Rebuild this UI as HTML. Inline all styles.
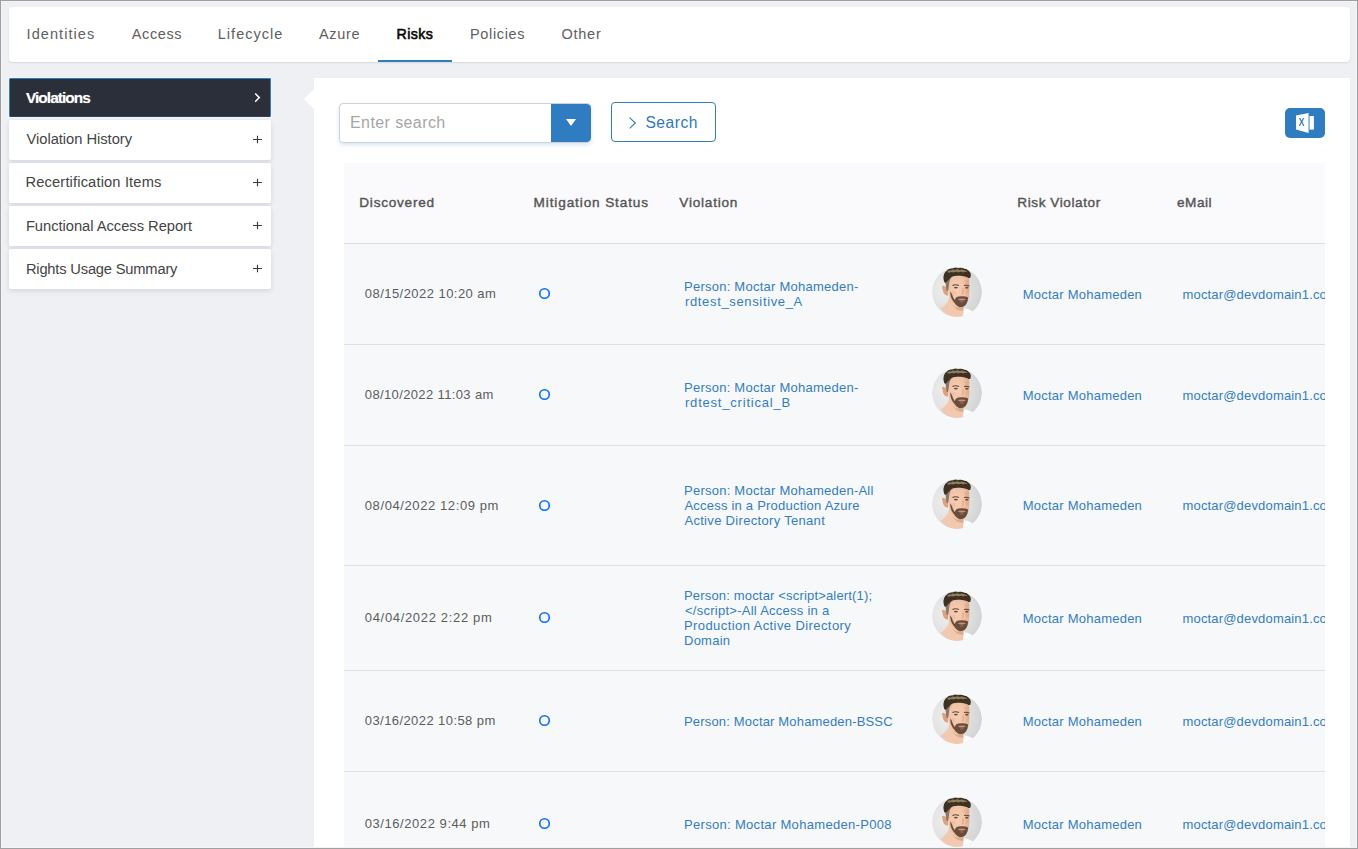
<!DOCTYPE html>
<html lang="en">
<head>
<meta charset="utf-8">
<title>Risks - Violations</title>
<style>
*{box-sizing:border-box;margin:0;padding:0}
html,body{width:1358px;height:849px;overflow:hidden;background:#eef0f4}
body{font-family:"Liberation Sans",sans-serif;position:relative;color:#555}
a{text-decoration:none}
.frame{position:absolute;left:0;top:0;width:1358px;height:849px;border:1px solid #a0a0a0;box-shadow:inset 0 0 0 1px #f3f4f8;pointer-events:none;z-index:50}
.t{position:absolute;white-space:nowrap;line-height:normal;display:block}
.tabs{position:absolute;left:9px;top:7px;width:1341px;height:55px;background:#fff;border-radius:4px;box-shadow:0 1px 2px rgba(0,0,0,.10)}
.tabline{position:absolute;left:378px;top:60px;width:74px;height:2px;background:#2f7dc0}
.mi{position:absolute;left:9px;width:262px;height:40px;background:#fff;border-radius:2px;box-shadow:0 2px 5px rgba(40,50,80,.13)}
.mi.on{background:#2b2f39;border:1px solid #2f7dc0;border-bottom-color:#2c445e;height:39px;box-shadow:0 0 0 1px rgba(255,255,255,.35);border-radius:1.5px}
.plus{position:absolute;left:253px}
.panel{position:absolute;left:314px;top:78px;width:1036px;height:771px;background:#fff}
.notch{position:absolute;left:304px;top:88.8px;width:0;height:0;border-top:10px solid transparent;border-bottom:10px solid transparent;border-right:10px solid #fff}
.search{position:absolute;left:339px;top:103px;width:252px;height:40px;border:1px solid #cfd3d8;border-radius:4px;background:#fff;box-shadow:0 2px 4px rgba(47,125,192,.19)}
.dd{position:absolute;left:551px;top:104px;width:40px;height:38px;background:#2f7dc0;border-radius:0 4.5px 4.5px 0}
.dd:after{content:"";position:absolute;left:15.3px;top:15px;border-left:5.2px solid transparent;border-right:5.2px solid transparent;border-top:7.3px solid #fff}
.btn{position:absolute;left:611px;top:102px;width:105px;height:40px;border:1px solid #2f7dc0;border-radius:4px;background:#fff}
.xl{position:absolute;left:1285px;top:108px;width:40px;height:30px;background:#2f7dc0;border-radius:5px}
.grid{position:absolute;left:344px;top:163px;width:981px;height:686px;background:#f7f8fa;overflow:hidden}
.gh{position:absolute;left:0;top:0;width:981px;height:80px;background:#fafafc}
.rl{position:absolute;left:0;width:981px;height:1px;background:#dcdfe3}
.dot{position:absolute;left:537.9px}
.av{position:absolute;left:932.2px;width:50px;height:50px;border-radius:50%;overflow:hidden}
.av svg{display:block}
.clip{position:absolute;left:0;top:0;width:1325px;height:849px;overflow:hidden}
</style>
</head>
<body>

<nav class="tabs"></nav>
<div class="tabline"></div>
<a class="t" style="left:26.60px;top:26px;font-size:14.5px;letter-spacing:1.068px;color:#606060;">Identities</a>
<a class="t" style="left:131.80px;top:26px;font-size:14.5px;letter-spacing:0.603px;color:#606060;">Access</a>
<a class="t" style="left:217.80px;top:26px;font-size:14.5px;letter-spacing:1.006px;color:#606060;">Lifecycle</a>
<a class="t" style="left:318.90px;top:26px;font-size:14.5px;letter-spacing:0.671px;color:#606060;">Azure</a>
<a class="t" style="left:396.60px;top:26px;font-size:14.2px;letter-spacing:0.379px;color:#0a0a0a;-webkit-text-stroke:0.6px #0a0a0a;">Risks</a>
<a class="t" style="left:470.00px;top:26px;font-size:14.5px;letter-spacing:0.655px;color:#606060;">Policies</a>
<a class="t" style="left:561.50px;top:26px;font-size:14.5px;letter-spacing:0.741px;color:#606060;">Other</a>
<div class="mi on" style="top:78px"></div>
<div class="mi" style="top:120px"></div>
<svg class="plus" style="top:135px" width="9" height="9" viewBox="0 0 9 9"><path d="M0 4.5 H9 M4.5 0.7 V8.3" stroke="#3a3a3a" stroke-width="1.15" fill="none"/></svg>
<div class="mi" style="top:163px"></div>
<svg class="plus" style="top:178px" width="9" height="9" viewBox="0 0 9 9"><path d="M0 4.5 H9 M4.5 0.7 V8.3" stroke="#3a3a3a" stroke-width="1.15" fill="none"/></svg>
<div class="mi" style="top:206px"></div>
<svg class="plus" style="top:221px" width="9" height="9" viewBox="0 0 9 9"><path d="M0 4.5 H9 M4.5 0.7 V8.3" stroke="#3a3a3a" stroke-width="1.15" fill="none"/></svg>
<div class="mi" style="top:249px"></div>
<svg class="plus" style="top:264px" width="9" height="9" viewBox="0 0 9 9"><path d="M0 4.5 H9 M4.5 0.7 V8.3" stroke="#3a3a3a" stroke-width="1.15" fill="none"/></svg>
<svg style="position:absolute;left:253px;top:91px" width="9" height="13" viewBox="0 0 9 13"><path d="M2.2 2.5 L6.3 6.6 L2.2 10.7" fill="none" stroke="#fff" stroke-width="1.5"/></svg>
<a class="t" style="left:25.90px;top:89px;font-size:15.4px;letter-spacing:-0.923px;color:#fff;font-weight:700;text-shadow:0 0 1px rgba(255,255,255,.5);">Violations</a>
<a class="t" style="left:26.50px;top:131px;font-size:14.7px;letter-spacing:-0.019px;color:#444;">Violation History</a>
<a class="t" style="left:25.50px;top:174px;font-size:14.7px;letter-spacing:0.14px;color:#444;">Recertification Items</a>
<a class="t" style="left:25.90px;top:218px;font-size:14.7px;letter-spacing:-0.016px;color:#444;">Functional Access Report</a>
<a class="t" style="left:25.90px;top:261px;font-size:14.7px;letter-spacing:-0.186px;color:#444;">Rights Usage Summary</a>
<main class="panel"></main><div class="notch"></div>
<div class="search"></div><div class="dd"></div>
<span class="t" style="left:350.00px;top:114px;font-size:16px;letter-spacing:0.408px;color:#a6a6a6;">Enter search</span>
<div class="btn"></div>
<svg style="position:absolute;left:627px;top:117px" width="10" height="12" viewBox="0 0 10 12"><path d="M2.7 0.6 L8.3 6 L2.7 11.4" fill="none" stroke="#2f78bd" stroke-width="1.05"/></svg>
<span class="t" style="left:645.40px;top:114px;font-size:15.6px;letter-spacing:0.533px;color:#2f78bd;">Search</span>
<div class="xl"><svg style="position:absolute;left:10px;top:4px" width="20" height="22" viewBox="0 0 20 22"><path d="M1 3.6 L13.6 1 L13.6 21 L1 17.6 Z" fill="#fff"/><rect x="13.6" y="4" width="1.3" height="13.6" fill="#8fbde3"/><rect x="14.9" y="4" width="4" height="13.6" fill="#fff"/></svg><span class="t" style="left:13.2px;top:8px;font-size:11px;font-weight:700;color:#2f7dc0;transform:scaleX(.78);transform-origin:50% 50%">X</span></div>
<section class="grid"><div class="gh"></div>
<div class="rl" style="top:80px"></div>
<div class="rl" style="top:181px"></div>
<div class="rl" style="top:282px"></div>
<div class="rl" style="top:402px"></div>
<div class="rl" style="top:507px"></div>
<div class="rl" style="top:608px"></div>
</section>
<span class="t" style="left:359.30px;top:195px;font-size:13.6px;letter-spacing:0.752px;color:#555;-webkit-text-stroke:0.4px #555;">Discovered</span>
<span class="t" style="left:533.60px;top:195px;font-size:13.6px;letter-spacing:0.875px;color:#555;-webkit-text-stroke:0.4px #555;">Mitigation Status</span>
<span class="t" style="left:679.30px;top:195px;font-size:13.6px;letter-spacing:0.77px;color:#555;-webkit-text-stroke:0.4px #555;">Violation</span>
<span class="t" style="left:1017.30px;top:195px;font-size:13.6px;letter-spacing:0.573px;color:#555;-webkit-text-stroke:0.4px #555;">Risk Violator</span>
<span class="t" style="left:1177.10px;top:195px;font-size:13.6px;letter-spacing:0.459px;color:#555;-webkit-text-stroke:0.4px #555;">eMail</span>
<div class="clip">
<span class="t" style="left:364.80px;top:286px;font-size:13px;letter-spacing:0.453px;color:#5c5c5c;">08/15/2022 10:20 am</span>
<svg class="dot" style="top:286.9px" width="13" height="13" viewBox="0 0 13 13"><circle cx="6.5" cy="6.5" r="4.75" fill="none" stroke="#0d6efd" stroke-width="1.6"/></svg>
<a class="t" style="left:684.00px;top:279px;font-size:13px;letter-spacing:0.245px;color:#347dc1;">Person: Moctar Mohameden-</a>
<a class="t" style="left:685.00px;top:294px;font-size:13px;letter-spacing:0.65px;color:#347dc1;">rdtest_sensitive_A</a>
<div class="av" style="top:267px"><svg width="50" height="50" viewBox="0 0 50 50" aria-label="Moctar Mohameden"><defs><radialGradient id="abg" cx="0.3" cy="0.45" r="0.8"><stop offset="0" stop-color="#efefef"/><stop offset="0.6" stop-color="#dedede"/><stop offset="1" stop-color="#cecece"/></radialGradient><radialGradient id="afc" cx="0.42" cy="0.42" r="0.7"><stop offset="0" stop-color="#f8d0b6"/><stop offset="0.65" stop-color="#efbfa2"/><stop offset="1" stop-color="#dca689"/></radialGradient><filter id="abl" filterUnits="userSpaceOnUse" x="-5" y="-5" width="60" height="60"><feGaussianBlur stdDeviation="0.55"/></filter><filter id="abs" filterUnits="userSpaceOnUse" x="-5" y="-5" width="60" height="60"><feGaussianBlur stdDeviation="0.4"/></filter><clipPath id="acl"><circle cx="25" cy="25" r="25"/></clipPath></defs><g clip-path="url(#acl)"><rect width="50" height="50" fill="url(#abg)"/><g filter="url(#abl)"><path d="M2 52 L6 44 L9 41.4 L17 49 L31 46 L31.4 41 Q37 42 41 44.4 L46 52 Z" fill="#fcfcfe"/><path d="M8 42.4 L10 41 L17.4 48.4 L16 50 Z" fill="#c9c9dd" opacity=".8"/><path d="M8.6 41.8 Q13 39 16 34.6 L17.5 29 L31 33 Q31 37 31.4 40.3 Q31.6 45 30.7 52 L20 52 L17 49 L8.6 41.8 Z" fill="#f2c9af"/><path d="M20 37.6 Q26 43.4 31.4 39.6 L31.5 43.4 Q26 45.4 20 37.6 Z" fill="#c9957c" opacity=".6"/><path d="M10.1 20.6 Q9.4 18.7 11.4 18.8 Q14 19.3 15.6 22 L16.2 28.4 Q12.6 29 11.2 25 Z" fill="#dba182"/><path d="M15.4 13 Q16 8.8 22 8.4 L35 8.8 Q37.4 10 37.2 15 L37.2 27 Q36.8 33.6 33.6 38 Q30 41.2 26.4 40.2 Q21 38.2 18.4 32.4 Q15.4 26 15.4 13 Z" fill="url(#afc)"/><path d="M32 13 Q34.4 20 33.4 28 Q35.6 27 37.2 25 L37.2 13 Z" fill="#dda283" opacity=".45"/><path d="M14.6 24 Q13 17 13.8 11 Q14.4 8.4 19 8.6 L19.4 10.8 Q17.2 13 17 18 Q16.8 21 16 24 Z" fill="#8a7766"/><path d="M11.6 12.6 Q10.8 6 15 3.4 Q17 0.8 20.4 1.6 Q23 -0.2 26 1.2 Q29 -0.2 31.6 1.4 Q35 1 36.8 4 Q39.8 6.4 38.4 10.4 Q37.4 11.8 35.4 10.2 Q31 8.2 26 8.8 Q21 8.6 18.4 10.8 Q16.4 13.4 13.4 16 Q11.8 15 11.6 12.6 Z" fill="#3d3024"/><path d="M15 5.2 Q16.6 2.6 19 3.6 Q20.6 1.8 23 3 Q25.4 1.6 27.6 3 Q30 1.8 32 3.2 Q34.6 3 35.6 5.2 Q33 4.2 31 5.4 Q28.6 4 26.4 5.4 Q24 4.2 21.6 5.6 Q19.4 4.4 17.6 5.8 Q16.2 5 15 5.2 Z" fill="#9f8868" opacity=".85"/><path d="M18 24.6 Q18.2 30 20.8 33.8 Q23.6 38.2 27.4 40.2 Q31 40.6 33.6 38 Q35.8 35 36.2 30.8 Q35.6 29.8 33.2 29.4 Q29.8 28.9 26.4 29.5 Q24 29.8 23.2 32 Q22.8 33.4 22.4 32.6 Q20.6 30 19.8 26.6 Z" fill="#5a4131" opacity=".9"/><ellipse cx="29.8" cy="35" rx="1.9" ry="0.8" fill="#a87a60" opacity=".7"/><path d="M25.6 31.9 Q29.6 31 34 31.9 Q32.4 33.6 29.8 33.6 Q27.2 33.6 25.6 31.9 Z" fill="#d48c7c"/><ellipse cx="21.6" cy="25.6" rx="2.4" ry="1.9" fill="#f4b5a0" opacity=".55"/></g><g filter="url(#abs)"><path d="M20.4 18.6 Q23.6 17 27 18.6" fill="none" stroke="#5d4433" stroke-width="1.1"/><path d="M32 18.6 Q34.8 17.6 37.3 19" fill="none" stroke="#5d4433" stroke-width="1.1"/><ellipse cx="23.9" cy="20.6" rx="2" ry="0.85" fill="#65503f"/><ellipse cx="34.8" cy="20.7" rx="1.7" ry="0.85" fill="#65503f"/><path d="M30.8 21.4 Q31.9 25 30.5 27.2" fill="none" stroke="#d4987d" stroke-width="0.9"/></g></g></svg>
</div>
<a class="t" style="left:1022.70px;top:287px;font-size:13px;letter-spacing:0.235px;color:#347dc1;">Moctar Mohameden</a>
<a class="t" style="left:1182.50px;top:287px;font-size:13px;letter-spacing:0.17px;color:#347dc1;">moctar@devdomain1.com</a>
<span class="t" style="left:364.80px;top:387px;font-size:13px;letter-spacing:0.368px;color:#5c5c5c;">08/10/2022 11:03 am</span>
<svg class="dot" style="top:387.9px" width="13" height="13" viewBox="0 0 13 13"><circle cx="6.5" cy="6.5" r="4.75" fill="none" stroke="#0d6efd" stroke-width="1.6"/></svg>
<a class="t" style="left:684.00px;top:380px;font-size:13px;letter-spacing:0.245px;color:#347dc1;">Person: Moctar Mohameden-</a>
<a class="t" style="left:685.00px;top:395px;font-size:13px;letter-spacing:0.793px;color:#347dc1;">rdtest_critical_B</a>
<div class="av" style="top:368px"><svg width="50" height="50" viewBox="0 0 50 50" aria-label="Moctar Mohameden"><g clip-path="url(#acl)"><rect width="50" height="50" fill="url(#abg)"/><g filter="url(#abl)"><path d="M2 52 L6 44 L9 41.4 L17 49 L31 46 L31.4 41 Q37 42 41 44.4 L46 52 Z" fill="#fcfcfe"/><path d="M8 42.4 L10 41 L17.4 48.4 L16 50 Z" fill="#c9c9dd" opacity=".8"/><path d="M8.6 41.8 Q13 39 16 34.6 L17.5 29 L31 33 Q31 37 31.4 40.3 Q31.6 45 30.7 52 L20 52 L17 49 L8.6 41.8 Z" fill="#f2c9af"/><path d="M20 37.6 Q26 43.4 31.4 39.6 L31.5 43.4 Q26 45.4 20 37.6 Z" fill="#c9957c" opacity=".6"/><path d="M10.1 20.6 Q9.4 18.7 11.4 18.8 Q14 19.3 15.6 22 L16.2 28.4 Q12.6 29 11.2 25 Z" fill="#dba182"/><path d="M15.4 13 Q16 8.8 22 8.4 L35 8.8 Q37.4 10 37.2 15 L37.2 27 Q36.8 33.6 33.6 38 Q30 41.2 26.4 40.2 Q21 38.2 18.4 32.4 Q15.4 26 15.4 13 Z" fill="url(#afc)"/><path d="M32 13 Q34.4 20 33.4 28 Q35.6 27 37.2 25 L37.2 13 Z" fill="#dda283" opacity=".45"/><path d="M14.6 24 Q13 17 13.8 11 Q14.4 8.4 19 8.6 L19.4 10.8 Q17.2 13 17 18 Q16.8 21 16 24 Z" fill="#8a7766"/><path d="M11.6 12.6 Q10.8 6 15 3.4 Q17 0.8 20.4 1.6 Q23 -0.2 26 1.2 Q29 -0.2 31.6 1.4 Q35 1 36.8 4 Q39.8 6.4 38.4 10.4 Q37.4 11.8 35.4 10.2 Q31 8.2 26 8.8 Q21 8.6 18.4 10.8 Q16.4 13.4 13.4 16 Q11.8 15 11.6 12.6 Z" fill="#3d3024"/><path d="M15 5.2 Q16.6 2.6 19 3.6 Q20.6 1.8 23 3 Q25.4 1.6 27.6 3 Q30 1.8 32 3.2 Q34.6 3 35.6 5.2 Q33 4.2 31 5.4 Q28.6 4 26.4 5.4 Q24 4.2 21.6 5.6 Q19.4 4.4 17.6 5.8 Q16.2 5 15 5.2 Z" fill="#9f8868" opacity=".85"/><path d="M18 24.6 Q18.2 30 20.8 33.8 Q23.6 38.2 27.4 40.2 Q31 40.6 33.6 38 Q35.8 35 36.2 30.8 Q35.6 29.8 33.2 29.4 Q29.8 28.9 26.4 29.5 Q24 29.8 23.2 32 Q22.8 33.4 22.4 32.6 Q20.6 30 19.8 26.6 Z" fill="#5a4131" opacity=".9"/><ellipse cx="29.8" cy="35" rx="1.9" ry="0.8" fill="#a87a60" opacity=".7"/><path d="M25.6 31.9 Q29.6 31 34 31.9 Q32.4 33.6 29.8 33.6 Q27.2 33.6 25.6 31.9 Z" fill="#d48c7c"/><ellipse cx="21.6" cy="25.6" rx="2.4" ry="1.9" fill="#f4b5a0" opacity=".55"/></g><g filter="url(#abs)"><path d="M20.4 18.6 Q23.6 17 27 18.6" fill="none" stroke="#5d4433" stroke-width="1.1"/><path d="M32 18.6 Q34.8 17.6 37.3 19" fill="none" stroke="#5d4433" stroke-width="1.1"/><ellipse cx="23.9" cy="20.6" rx="2" ry="0.85" fill="#65503f"/><ellipse cx="34.8" cy="20.7" rx="1.7" ry="0.85" fill="#65503f"/><path d="M30.8 21.4 Q31.9 25 30.5 27.2" fill="none" stroke="#d4987d" stroke-width="0.9"/></g></g></svg>
</div>
<a class="t" style="left:1022.70px;top:388px;font-size:13px;letter-spacing:0.235px;color:#347dc1;">Moctar Mohameden</a>
<a class="t" style="left:1182.50px;top:388px;font-size:13px;letter-spacing:0.17px;color:#347dc1;">moctar@devdomain1.com</a>
<span class="t" style="left:364.80px;top:498px;font-size:13px;letter-spacing:0.597px;color:#5c5c5c;">08/04/2022 12:09 pm</span>
<svg class="dot" style="top:498.8px" width="13" height="13" viewBox="0 0 13 13"><circle cx="6.5" cy="6.5" r="4.75" fill="none" stroke="#0d6efd" stroke-width="1.6"/></svg>
<a class="t" style="left:684.00px;top:483px;font-size:13px;letter-spacing:0.244px;color:#347dc1;">Person: Moctar Mohameden-All</a>
<a class="t" style="left:684.40px;top:498px;font-size:13px;letter-spacing:0.223px;color:#347dc1;">Access in a Production Azure</a>
<a class="t" style="left:684.40px;top:513px;font-size:13px;letter-spacing:0.316px;color:#347dc1;">Active Directory Tenant</a>
<div class="av" style="top:479px"><svg width="50" height="50" viewBox="0 0 50 50" aria-label="Moctar Mohameden"><g clip-path="url(#acl)"><rect width="50" height="50" fill="url(#abg)"/><g filter="url(#abl)"><path d="M2 52 L6 44 L9 41.4 L17 49 L31 46 L31.4 41 Q37 42 41 44.4 L46 52 Z" fill="#fcfcfe"/><path d="M8 42.4 L10 41 L17.4 48.4 L16 50 Z" fill="#c9c9dd" opacity=".8"/><path d="M8.6 41.8 Q13 39 16 34.6 L17.5 29 L31 33 Q31 37 31.4 40.3 Q31.6 45 30.7 52 L20 52 L17 49 L8.6 41.8 Z" fill="#f2c9af"/><path d="M20 37.6 Q26 43.4 31.4 39.6 L31.5 43.4 Q26 45.4 20 37.6 Z" fill="#c9957c" opacity=".6"/><path d="M10.1 20.6 Q9.4 18.7 11.4 18.8 Q14 19.3 15.6 22 L16.2 28.4 Q12.6 29 11.2 25 Z" fill="#dba182"/><path d="M15.4 13 Q16 8.8 22 8.4 L35 8.8 Q37.4 10 37.2 15 L37.2 27 Q36.8 33.6 33.6 38 Q30 41.2 26.4 40.2 Q21 38.2 18.4 32.4 Q15.4 26 15.4 13 Z" fill="url(#afc)"/><path d="M32 13 Q34.4 20 33.4 28 Q35.6 27 37.2 25 L37.2 13 Z" fill="#dda283" opacity=".45"/><path d="M14.6 24 Q13 17 13.8 11 Q14.4 8.4 19 8.6 L19.4 10.8 Q17.2 13 17 18 Q16.8 21 16 24 Z" fill="#8a7766"/><path d="M11.6 12.6 Q10.8 6 15 3.4 Q17 0.8 20.4 1.6 Q23 -0.2 26 1.2 Q29 -0.2 31.6 1.4 Q35 1 36.8 4 Q39.8 6.4 38.4 10.4 Q37.4 11.8 35.4 10.2 Q31 8.2 26 8.8 Q21 8.6 18.4 10.8 Q16.4 13.4 13.4 16 Q11.8 15 11.6 12.6 Z" fill="#3d3024"/><path d="M15 5.2 Q16.6 2.6 19 3.6 Q20.6 1.8 23 3 Q25.4 1.6 27.6 3 Q30 1.8 32 3.2 Q34.6 3 35.6 5.2 Q33 4.2 31 5.4 Q28.6 4 26.4 5.4 Q24 4.2 21.6 5.6 Q19.4 4.4 17.6 5.8 Q16.2 5 15 5.2 Z" fill="#9f8868" opacity=".85"/><path d="M18 24.6 Q18.2 30 20.8 33.8 Q23.6 38.2 27.4 40.2 Q31 40.6 33.6 38 Q35.8 35 36.2 30.8 Q35.6 29.8 33.2 29.4 Q29.8 28.9 26.4 29.5 Q24 29.8 23.2 32 Q22.8 33.4 22.4 32.6 Q20.6 30 19.8 26.6 Z" fill="#5a4131" opacity=".9"/><ellipse cx="29.8" cy="35" rx="1.9" ry="0.8" fill="#a87a60" opacity=".7"/><path d="M25.6 31.9 Q29.6 31 34 31.9 Q32.4 33.6 29.8 33.6 Q27.2 33.6 25.6 31.9 Z" fill="#d48c7c"/><ellipse cx="21.6" cy="25.6" rx="2.4" ry="1.9" fill="#f4b5a0" opacity=".55"/></g><g filter="url(#abs)"><path d="M20.4 18.6 Q23.6 17 27 18.6" fill="none" stroke="#5d4433" stroke-width="1.1"/><path d="M32 18.6 Q34.8 17.6 37.3 19" fill="none" stroke="#5d4433" stroke-width="1.1"/><ellipse cx="23.9" cy="20.6" rx="2" ry="0.85" fill="#65503f"/><ellipse cx="34.8" cy="20.7" rx="1.7" ry="0.85" fill="#65503f"/><path d="M30.8 21.4 Q31.9 25 30.5 27.2" fill="none" stroke="#d4987d" stroke-width="0.9"/></g></g></svg>
</div>
<a class="t" style="left:1022.70px;top:498px;font-size:13px;letter-spacing:0.235px;color:#347dc1;">Moctar Mohameden</a>
<a class="t" style="left:1182.50px;top:498px;font-size:13px;letter-spacing:0.17px;color:#347dc1;">moctar@devdomain1.com</a>
<span class="t" style="left:364.80px;top:610px;font-size:13px;letter-spacing:0.669px;color:#5c5c5c;">04/04/2022 2:22 pm</span>
<svg class="dot" style="top:610.9px" width="13" height="13" viewBox="0 0 13 13"><circle cx="6.5" cy="6.5" r="4.75" fill="none" stroke="#0d6efd" stroke-width="1.6"/></svg>
<a class="t" style="left:684.00px;top:588px;font-size:13px;letter-spacing:0.172px;color:#347dc1;">Person: moctar &lt;script&gt;alert(1);</a>
<a class="t" style="left:685.00px;top:603px;font-size:13px;letter-spacing:0.259px;color:#347dc1;">&lt;/script&gt;-All Access in a</a>
<a class="t" style="left:684.00px;top:618px;font-size:13px;letter-spacing:0.412px;color:#347dc1;">Production Active Directory</a>
<a class="t" style="left:684.00px;top:633px;font-size:13px;letter-spacing:0.247px;color:#347dc1;">Domain</a>
<div class="av" style="top:591px"><svg width="50" height="50" viewBox="0 0 50 50" aria-label="Moctar Mohameden"><g clip-path="url(#acl)"><rect width="50" height="50" fill="url(#abg)"/><g filter="url(#abl)"><path d="M2 52 L6 44 L9 41.4 L17 49 L31 46 L31.4 41 Q37 42 41 44.4 L46 52 Z" fill="#fcfcfe"/><path d="M8 42.4 L10 41 L17.4 48.4 L16 50 Z" fill="#c9c9dd" opacity=".8"/><path d="M8.6 41.8 Q13 39 16 34.6 L17.5 29 L31 33 Q31 37 31.4 40.3 Q31.6 45 30.7 52 L20 52 L17 49 L8.6 41.8 Z" fill="#f2c9af"/><path d="M20 37.6 Q26 43.4 31.4 39.6 L31.5 43.4 Q26 45.4 20 37.6 Z" fill="#c9957c" opacity=".6"/><path d="M10.1 20.6 Q9.4 18.7 11.4 18.8 Q14 19.3 15.6 22 L16.2 28.4 Q12.6 29 11.2 25 Z" fill="#dba182"/><path d="M15.4 13 Q16 8.8 22 8.4 L35 8.8 Q37.4 10 37.2 15 L37.2 27 Q36.8 33.6 33.6 38 Q30 41.2 26.4 40.2 Q21 38.2 18.4 32.4 Q15.4 26 15.4 13 Z" fill="url(#afc)"/><path d="M32 13 Q34.4 20 33.4 28 Q35.6 27 37.2 25 L37.2 13 Z" fill="#dda283" opacity=".45"/><path d="M14.6 24 Q13 17 13.8 11 Q14.4 8.4 19 8.6 L19.4 10.8 Q17.2 13 17 18 Q16.8 21 16 24 Z" fill="#8a7766"/><path d="M11.6 12.6 Q10.8 6 15 3.4 Q17 0.8 20.4 1.6 Q23 -0.2 26 1.2 Q29 -0.2 31.6 1.4 Q35 1 36.8 4 Q39.8 6.4 38.4 10.4 Q37.4 11.8 35.4 10.2 Q31 8.2 26 8.8 Q21 8.6 18.4 10.8 Q16.4 13.4 13.4 16 Q11.8 15 11.6 12.6 Z" fill="#3d3024"/><path d="M15 5.2 Q16.6 2.6 19 3.6 Q20.6 1.8 23 3 Q25.4 1.6 27.6 3 Q30 1.8 32 3.2 Q34.6 3 35.6 5.2 Q33 4.2 31 5.4 Q28.6 4 26.4 5.4 Q24 4.2 21.6 5.6 Q19.4 4.4 17.6 5.8 Q16.2 5 15 5.2 Z" fill="#9f8868" opacity=".85"/><path d="M18 24.6 Q18.2 30 20.8 33.8 Q23.6 38.2 27.4 40.2 Q31 40.6 33.6 38 Q35.8 35 36.2 30.8 Q35.6 29.8 33.2 29.4 Q29.8 28.9 26.4 29.5 Q24 29.8 23.2 32 Q22.8 33.4 22.4 32.6 Q20.6 30 19.8 26.6 Z" fill="#5a4131" opacity=".9"/><ellipse cx="29.8" cy="35" rx="1.9" ry="0.8" fill="#a87a60" opacity=".7"/><path d="M25.6 31.9 Q29.6 31 34 31.9 Q32.4 33.6 29.8 33.6 Q27.2 33.6 25.6 31.9 Z" fill="#d48c7c"/><ellipse cx="21.6" cy="25.6" rx="2.4" ry="1.9" fill="#f4b5a0" opacity=".55"/></g><g filter="url(#abs)"><path d="M20.4 18.6 Q23.6 17 27 18.6" fill="none" stroke="#5d4433" stroke-width="1.1"/><path d="M32 18.6 Q34.8 17.6 37.3 19" fill="none" stroke="#5d4433" stroke-width="1.1"/><ellipse cx="23.9" cy="20.6" rx="2" ry="0.85" fill="#65503f"/><ellipse cx="34.8" cy="20.7" rx="1.7" ry="0.85" fill="#65503f"/><path d="M30.8 21.4 Q31.9 25 30.5 27.2" fill="none" stroke="#d4987d" stroke-width="0.9"/></g></g></svg>
</div>
<a class="t" style="left:1022.70px;top:611px;font-size:13px;letter-spacing:0.235px;color:#347dc1;">Moctar Mohameden</a>
<a class="t" style="left:1182.50px;top:611px;font-size:13px;letter-spacing:0.17px;color:#347dc1;">moctar@devdomain1.com</a>
<span class="t" style="left:364.80px;top:713px;font-size:13px;letter-spacing:0.42px;color:#5c5c5c;">03/16/2022 10:58 pm</span>
<svg class="dot" style="top:713.8px" width="13" height="13" viewBox="0 0 13 13"><circle cx="6.5" cy="6.5" r="4.75" fill="none" stroke="#0d6efd" stroke-width="1.6"/></svg>
<a class="t" style="left:684.00px;top:714px;font-size:13px;letter-spacing:0.173px;color:#347dc1;">Person: Moctar Mohameden-BSSC</a>
<div class="av" style="top:694px"><svg width="50" height="50" viewBox="0 0 50 50" aria-label="Moctar Mohameden"><g clip-path="url(#acl)"><rect width="50" height="50" fill="url(#abg)"/><g filter="url(#abl)"><path d="M2 52 L6 44 L9 41.4 L17 49 L31 46 L31.4 41 Q37 42 41 44.4 L46 52 Z" fill="#fcfcfe"/><path d="M8 42.4 L10 41 L17.4 48.4 L16 50 Z" fill="#c9c9dd" opacity=".8"/><path d="M8.6 41.8 Q13 39 16 34.6 L17.5 29 L31 33 Q31 37 31.4 40.3 Q31.6 45 30.7 52 L20 52 L17 49 L8.6 41.8 Z" fill="#f2c9af"/><path d="M20 37.6 Q26 43.4 31.4 39.6 L31.5 43.4 Q26 45.4 20 37.6 Z" fill="#c9957c" opacity=".6"/><path d="M10.1 20.6 Q9.4 18.7 11.4 18.8 Q14 19.3 15.6 22 L16.2 28.4 Q12.6 29 11.2 25 Z" fill="#dba182"/><path d="M15.4 13 Q16 8.8 22 8.4 L35 8.8 Q37.4 10 37.2 15 L37.2 27 Q36.8 33.6 33.6 38 Q30 41.2 26.4 40.2 Q21 38.2 18.4 32.4 Q15.4 26 15.4 13 Z" fill="url(#afc)"/><path d="M32 13 Q34.4 20 33.4 28 Q35.6 27 37.2 25 L37.2 13 Z" fill="#dda283" opacity=".45"/><path d="M14.6 24 Q13 17 13.8 11 Q14.4 8.4 19 8.6 L19.4 10.8 Q17.2 13 17 18 Q16.8 21 16 24 Z" fill="#8a7766"/><path d="M11.6 12.6 Q10.8 6 15 3.4 Q17 0.8 20.4 1.6 Q23 -0.2 26 1.2 Q29 -0.2 31.6 1.4 Q35 1 36.8 4 Q39.8 6.4 38.4 10.4 Q37.4 11.8 35.4 10.2 Q31 8.2 26 8.8 Q21 8.6 18.4 10.8 Q16.4 13.4 13.4 16 Q11.8 15 11.6 12.6 Z" fill="#3d3024"/><path d="M15 5.2 Q16.6 2.6 19 3.6 Q20.6 1.8 23 3 Q25.4 1.6 27.6 3 Q30 1.8 32 3.2 Q34.6 3 35.6 5.2 Q33 4.2 31 5.4 Q28.6 4 26.4 5.4 Q24 4.2 21.6 5.6 Q19.4 4.4 17.6 5.8 Q16.2 5 15 5.2 Z" fill="#9f8868" opacity=".85"/><path d="M18 24.6 Q18.2 30 20.8 33.8 Q23.6 38.2 27.4 40.2 Q31 40.6 33.6 38 Q35.8 35 36.2 30.8 Q35.6 29.8 33.2 29.4 Q29.8 28.9 26.4 29.5 Q24 29.8 23.2 32 Q22.8 33.4 22.4 32.6 Q20.6 30 19.8 26.6 Z" fill="#5a4131" opacity=".9"/><ellipse cx="29.8" cy="35" rx="1.9" ry="0.8" fill="#a87a60" opacity=".7"/><path d="M25.6 31.9 Q29.6 31 34 31.9 Q32.4 33.6 29.8 33.6 Q27.2 33.6 25.6 31.9 Z" fill="#d48c7c"/><ellipse cx="21.6" cy="25.6" rx="2.4" ry="1.9" fill="#f4b5a0" opacity=".55"/></g><g filter="url(#abs)"><path d="M20.4 18.6 Q23.6 17 27 18.6" fill="none" stroke="#5d4433" stroke-width="1.1"/><path d="M32 18.6 Q34.8 17.6 37.3 19" fill="none" stroke="#5d4433" stroke-width="1.1"/><ellipse cx="23.9" cy="20.6" rx="2" ry="0.85" fill="#65503f"/><ellipse cx="34.8" cy="20.7" rx="1.7" ry="0.85" fill="#65503f"/><path d="M30.8 21.4 Q31.9 25 30.5 27.2" fill="none" stroke="#d4987d" stroke-width="0.9"/></g></g></svg>
</div>
<a class="t" style="left:1022.70px;top:714px;font-size:13px;letter-spacing:0.235px;color:#347dc1;">Moctar Mohameden</a>
<a class="t" style="left:1182.50px;top:714px;font-size:13px;letter-spacing:0.17px;color:#347dc1;">moctar@devdomain1.com</a>
<span class="t" style="left:364.80px;top:816px;font-size:13px;letter-spacing:0.558px;color:#5c5c5c;">03/16/2022 9:44 pm</span>
<svg class="dot" style="top:817.0px" width="13" height="13" viewBox="0 0 13 13"><circle cx="6.5" cy="6.5" r="4.75" fill="none" stroke="#0d6efd" stroke-width="1.6"/></svg>
<a class="t" style="left:684.00px;top:817px;font-size:13px;letter-spacing:0.315px;color:#347dc1;">Person: Moctar Mohameden-P008</a>
<div class="av" style="top:797px"><svg width="50" height="50" viewBox="0 0 50 50" aria-label="Moctar Mohameden"><g clip-path="url(#acl)"><rect width="50" height="50" fill="url(#abg)"/><g filter="url(#abl)"><path d="M2 52 L6 44 L9 41.4 L17 49 L31 46 L31.4 41 Q37 42 41 44.4 L46 52 Z" fill="#fcfcfe"/><path d="M8 42.4 L10 41 L17.4 48.4 L16 50 Z" fill="#c9c9dd" opacity=".8"/><path d="M8.6 41.8 Q13 39 16 34.6 L17.5 29 L31 33 Q31 37 31.4 40.3 Q31.6 45 30.7 52 L20 52 L17 49 L8.6 41.8 Z" fill="#f2c9af"/><path d="M20 37.6 Q26 43.4 31.4 39.6 L31.5 43.4 Q26 45.4 20 37.6 Z" fill="#c9957c" opacity=".6"/><path d="M10.1 20.6 Q9.4 18.7 11.4 18.8 Q14 19.3 15.6 22 L16.2 28.4 Q12.6 29 11.2 25 Z" fill="#dba182"/><path d="M15.4 13 Q16 8.8 22 8.4 L35 8.8 Q37.4 10 37.2 15 L37.2 27 Q36.8 33.6 33.6 38 Q30 41.2 26.4 40.2 Q21 38.2 18.4 32.4 Q15.4 26 15.4 13 Z" fill="url(#afc)"/><path d="M32 13 Q34.4 20 33.4 28 Q35.6 27 37.2 25 L37.2 13 Z" fill="#dda283" opacity=".45"/><path d="M14.6 24 Q13 17 13.8 11 Q14.4 8.4 19 8.6 L19.4 10.8 Q17.2 13 17 18 Q16.8 21 16 24 Z" fill="#8a7766"/><path d="M11.6 12.6 Q10.8 6 15 3.4 Q17 0.8 20.4 1.6 Q23 -0.2 26 1.2 Q29 -0.2 31.6 1.4 Q35 1 36.8 4 Q39.8 6.4 38.4 10.4 Q37.4 11.8 35.4 10.2 Q31 8.2 26 8.8 Q21 8.6 18.4 10.8 Q16.4 13.4 13.4 16 Q11.8 15 11.6 12.6 Z" fill="#3d3024"/><path d="M15 5.2 Q16.6 2.6 19 3.6 Q20.6 1.8 23 3 Q25.4 1.6 27.6 3 Q30 1.8 32 3.2 Q34.6 3 35.6 5.2 Q33 4.2 31 5.4 Q28.6 4 26.4 5.4 Q24 4.2 21.6 5.6 Q19.4 4.4 17.6 5.8 Q16.2 5 15 5.2 Z" fill="#9f8868" opacity=".85"/><path d="M18 24.6 Q18.2 30 20.8 33.8 Q23.6 38.2 27.4 40.2 Q31 40.6 33.6 38 Q35.8 35 36.2 30.8 Q35.6 29.8 33.2 29.4 Q29.8 28.9 26.4 29.5 Q24 29.8 23.2 32 Q22.8 33.4 22.4 32.6 Q20.6 30 19.8 26.6 Z" fill="#5a4131" opacity=".9"/><ellipse cx="29.8" cy="35" rx="1.9" ry="0.8" fill="#a87a60" opacity=".7"/><path d="M25.6 31.9 Q29.6 31 34 31.9 Q32.4 33.6 29.8 33.6 Q27.2 33.6 25.6 31.9 Z" fill="#d48c7c"/><ellipse cx="21.6" cy="25.6" rx="2.4" ry="1.9" fill="#f4b5a0" opacity=".55"/></g><g filter="url(#abs)"><path d="M20.4 18.6 Q23.6 17 27 18.6" fill="none" stroke="#5d4433" stroke-width="1.1"/><path d="M32 18.6 Q34.8 17.6 37.3 19" fill="none" stroke="#5d4433" stroke-width="1.1"/><ellipse cx="23.9" cy="20.6" rx="2" ry="0.85" fill="#65503f"/><ellipse cx="34.8" cy="20.7" rx="1.7" ry="0.85" fill="#65503f"/><path d="M30.8 21.4 Q31.9 25 30.5 27.2" fill="none" stroke="#d4987d" stroke-width="0.9"/></g></g></svg>
</div>
<a class="t" style="left:1022.70px;top:817px;font-size:13px;letter-spacing:0.235px;color:#347dc1;">Moctar Mohameden</a>
<a class="t" style="left:1182.50px;top:817px;font-size:13px;letter-spacing:0.17px;color:#347dc1;">moctar@devdomain1.com</a>
</div>
<div class="frame"></div>
</body></html>
